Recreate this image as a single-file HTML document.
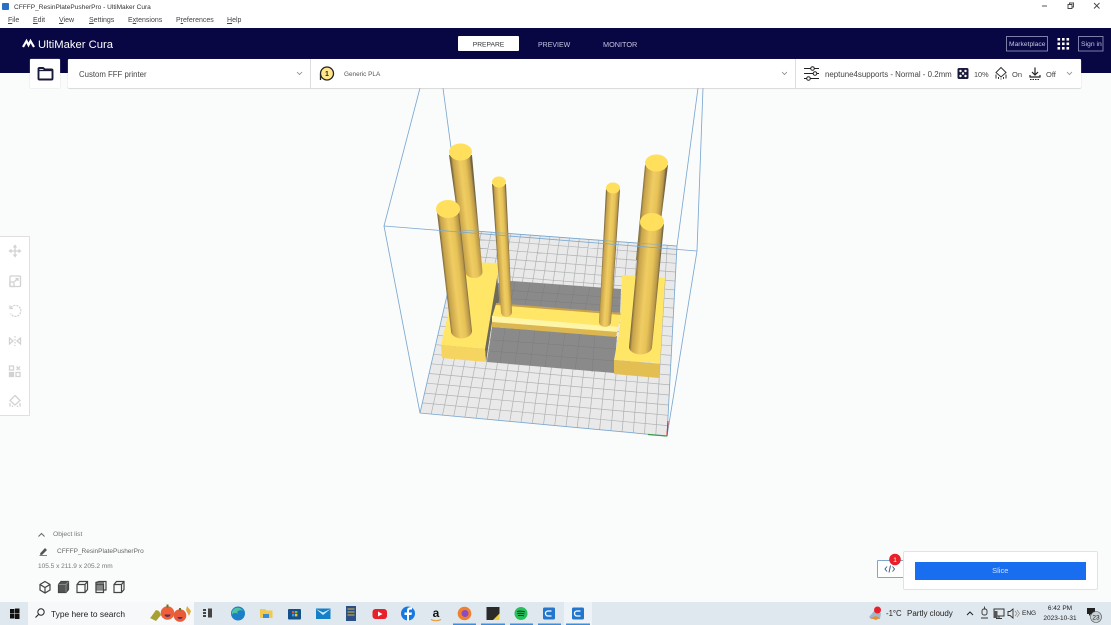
<!DOCTYPE html>
<html><head><meta charset="utf-8"><style>
html,body{margin:0;padding:0}
body{width:1111px;height:625px;overflow:hidden;position:relative;background:#fafbfb;font-family:"Liberation Sans",sans-serif;color:#333}
.a{position:absolute;white-space:nowrap}
svg{position:absolute;left:0;top:0}
u{text-decoration:underline}
</style></head><body>
<svg width="1111" height="625" viewBox="0 0 1111 625" style="z-index:1">
<defs>
<linearGradient id="p"><stop offset="0" stop-color="#77683e"/><stop offset=".1" stop-color="#c7a24b"/><stop offset=".45" stop-color="#f0cd62"/><stop offset=".7" stop-color="#e6c257"/><stop offset=".92" stop-color="#b9974a"/><stop offset="1" stop-color="#6f6340"/></linearGradient>
<linearGradient id="p1" href="#p" gradientUnits="userSpaceOnUse" x1="457" y1="214" x2="477" y2="211.700"/>
<linearGradient id="p2" href="#p" gradientUnits="userSpaceOnUse" x1="444" y1="272" x2="465.500" y2="269.600"/>
<linearGradient id="p3" href="#p" gradientUnits="userSpaceOnUse" x1="496.500" y1="248" x2="509" y2="247.300"/>
<linearGradient id="p4" href="#p" gradientUnits="userSpaceOnUse" x1="602.500" y1="255" x2="615.500" y2="255.800"/>
<linearGradient id="p5" href="#p" gradientUnits="userSpaceOnUse" x1="640.500" y1="212" x2="662" y2="214"/>
<linearGradient id="p6" href="#p" gradientUnits="userSpaceOnUse" x1="634.700" y1="285" x2="658" y2="287"/>
</defs>
<path d="M462 230L677 246L667 436L420 413Z" fill="#e9e9e9"/>
<path fill="none" stroke="#aeb2b4" stroke-width=".7" d="M431.2 414L471.8 230.7M442.5 415.1L481.5 231.5M453.7 416.1L491.3 232.2M464.9 417.2L501.1 232.9M476.1 418.2L510.9 233.6M487.4 419.3L520.6 234.4M498.6 420.3L530.4 235.1M509.8 421.4L540.2 235.8M521 422.4L550 236.5M532.3 423.5L559.7 237.3M543.5 424.5L569.5 238M554.7 425.5L579.3 238.7M566 426.6L589 239.5M577.2 427.6L598.8 240.2M588.4 428.7L608.6 240.9M599.6 429.7L618.4 241.6M610.9 430.8L628.1 242.4M622.1 431.8L637.9 243.1M633.3 432.9L647.7 243.8M644.5 433.9L657.5 244.5M655.8 435L667.2 245.3
M422.3 402.9L667.6 425.6M424.6 393.1L668.1 415.3M426.8 383.2L668.6 405M429.1 373.5L669.2 395M431.3 363.8L669.7 384.9M433.5 354.3L670.2 375M435.7 344.7L670.7 365.1M437.8 335.4L671.2 355.4M440 326.1L671.8 345.8M442.1 316.9L672.3 336.3M444.2 307.8L672.8 326.8M446.2 298.8L673.2 317.4M448.3 289.8L673.7 308.1M450.3 281L674.2 299M452.3 272.3L674.7 289.9M454.3 263.7L675.2 281M456.2 255.1L675.6 272M458.2 246.6L676.1 263.3M460.1 238.2L676.6 254.5"/>
<g fill="none" stroke="#7ba8d0" stroke-width=".85">
<path d="M420 88L384 226L420 413L667 436L697 251L703 88"/>
<path d="M443 88L462 230L420 413M698 88L677 246L667 436M462 230L677 246"/>
</g>
<path d="M512 281L621 289L620 314L496 304L498 283Z" fill="#8a8a8a"/>
<path d="M492 327L617 336L614 373L487 362Z" fill="#8a8a8a"/>
<path fill="none" stroke="#7d7d7d" stroke-width=".5" d="M503 290L621 298M499 298L620 306M493 340L616 349M490 351L615 361M515 282L510 304M530 283L525 305M545 284L540 306M560 285L555 307M575 286L570 309M590 287L585 310M605 288L600 311M505 329L500 363M520 330L515 364M535 331L530 366M550 332L545 367M565 333L560 368M580 334L575 370M595 335L592 372"/>
<path d="M485 349L497 272L499 300L492 322L486 362Z" fill="#6f6a55"/>
<path d="M496 304L622 313L618 327L492 317Z" fill="#ffe666"/>
<path d="M492 316L618 327L617 332L492 322Z" fill="#fff5a6"/>
<path d="M492 322L617 332L616 337L492 327Z" fill="#dcb64f"/>
<path d="M496 303L622 313L622 315L496 305Z" fill="#c9a24a"/>
<path d="M441 345L485 349L499 266L497 263L460 262Z" fill="#ffe666"/>
<path d="M441 345L485 349L486 362L442 358Z" fill="#f5d45f"/>
<path d="M622 275L665 278L660 363L614 360L620 328Z" fill="#ffe666"/>
<path d="M614 360L660 364L659 378L614 374Z" fill="#e3bf52"/>
<path d="M449 155L472 155L482.500 272A8.500 6 0 0 1 465.500 272Z" fill="url(#p1)"/>
<ellipse cx="460.500" cy="152" rx="11.500" ry="8.500" fill="#ffdf5c"/>
<path d="M492 184L506 184L512 312A5.500 5 0 0 1 501 312Z" fill="url(#p3)"/>
<ellipse cx="499" cy="182" rx="7" ry="5.500" fill="#ffdf5c"/>
<path d="M606 189L620 189L611 322A6 5 0 0 1 599 322Z" fill="url(#p4)"/>
<ellipse cx="613" cy="188" rx="7" ry="5.500" fill="#ffdf5c"/>
<path d="M645 165L668 165L656 260L636 260Z" fill="url(#p5)"/>
<ellipse cx="656.500" cy="163" rx="11.500" ry="8.500" fill="#ffdf5c"/>
<path d="M437 212L459 212L472 331A10.500 7.500 0 0 1 451 331Z" fill="url(#p2)"/>
<ellipse cx="448" cy="209" rx="12" ry="9" fill="#ffdf5c"/>
<path d="M640.500 224L664 224L652 347A11.500 7.500 0 0 1 629 347Z" fill="url(#p6)"/>
<ellipse cx="652" cy="222" rx="12" ry="9" fill="#ffdf5c"/>
<path d="M384 226L697 251" stroke="#7ba8d0" stroke-width=".85" fill="none"/>
<path d="M462 230L677 246" stroke="#7ba8d0" stroke-width=".7" fill="none" opacity=".7"/>
<path d="M667 436L668 421" stroke="#d33" stroke-width="1.200"/>
<path d="M667 436L648 434.500" stroke="#3a9a45" stroke-width="1.200"/>
</svg>

<!-- title bar -->
<div class="a" style="left:0;top:0;width:1111px;height:28px;background:#fff;z-index:2"></div>
<div class="a" style="left:2px;top:3px;width:7px;height:7px;background:#2a6fc4;border-radius:1px;z-index:3"></div>
<div class="a" style="left:14px;top:2.500px;font-size:6.550px;line-height:10px;color:#333;z-index:3">CFFFP_ResinPlatePusherPro - UltiMaker Cura</div>
<div class="a" style="left:8px;top:16px;font-size:7px;line-height:10px;color:#444;z-index:3"><u>F</u>ile</div>
<div class="a" style="left:33px;top:16px;font-size:7px;line-height:10px;color:#444;z-index:3"><u>E</u>dit</div>
<div class="a" style="left:59px;top:16px;font-size:7px;line-height:10px;color:#444;z-index:3"><u>V</u>iew</div>
<div class="a" style="left:89px;top:16px;font-size:7px;line-height:10px;color:#444;z-index:3"><u>S</u>ettings</div>
<div class="a" style="left:128px;top:16px;font-size:7px;line-height:10px;color:#444;z-index:3">E<u>x</u>tensions</div>
<div class="a" style="left:176px;top:16px;font-size:7px;line-height:10px;color:#444;z-index:3">P<u>r</u>eferences</div>
<div class="a" style="left:227px;top:16px;font-size:7px;line-height:10px;color:#444;z-index:3"><u>H</u>elp</div>
<svg width="1111" height="28" style="z-index:3" viewBox="0 0 1111 28">
<path d="M1042 6H1047" stroke="#555" stroke-width="1"/>
<path d="M1068 4.500h4v4h-4zM1069.500 4.500v-1.500h4v4h-1.500" fill="none" stroke="#444" stroke-width=".9"/>
<path d="M1094 3L1099.500 8.500M1099.500 3L1094 8.500" stroke="#444" stroke-width=".9"/>
</svg>

<!-- header -->
<div class="a" style="left:0;top:28px;width:1111px;height:45px;background:#080643;z-index:2"></div>
<svg width="1111" height="73" style="z-index:3" viewBox="0 0 1111 73">
<path d="M23 47L26.500 41L28.500 45L30.500 41L34 47" fill="none" stroke="#fff" stroke-width="2.200"/>
<rect x="1006.500" y="36.500" width="41" height="14.500" fill="none" stroke="#9c9cc4" stroke-width=".8"/>
<rect x="1078.500" y="36.500" width="24.500" height="14.500" fill="none" stroke="#9c9cc4" stroke-width=".8"/>
<g fill="#fff"><rect x="1057.500" y="38" width="2.600" height="2.600"/><rect x="1062" y="38" width="2.600" height="2.600"/><rect x="1066.500" y="38" width="2.600" height="2.600"/><rect x="1057.500" y="42.500" width="2.600" height="2.600"/><rect x="1062" y="42.500" width="2.600" height="2.600"/><rect x="1066.500" y="42.500" width="2.600" height="2.600"/><rect x="1057.500" y="47" width="2.600" height="2.600"/><rect x="1062" y="47" width="2.600" height="2.600"/><rect x="1066.500" y="47" width="2.600" height="2.600"/></g>
</svg>
<div class="a" style="left:38px;top:38px;font-size:11.250px;line-height:14px;color:#fff;z-index:3">UltiMaker Cura</div>
<div class="a" style="left:458px;top:36px;width:61px;height:15px;background:#fff;border-radius:1px;z-index:3"></div>
<div class="a" style="left:458px;top:37px;width:61px;z-index:4;text-align:center;font-size:6.700px;line-height:15px;color:#333;transform:translateY(.5px)">PREPARE</div>
<div class="a" style="left:538px;top:38px;font-size:7px;line-height:15px;color:#c4c4e0;z-index:3">PREVIEW</div>
<div class="a" style="left:603px;top:37px;font-size:7.300px;line-height:15px;color:#c4c4e0;z-index:3">MONITOR</div>
<div class="a" style="left:1009px;top:36.500px;font-size:6.700px;line-height:15px;color:#c4c4e0;z-index:3">Marketplace</div>
<div class="a" style="left:1081px;top:36.500px;font-size:6.800px;line-height:15px;color:#c4c4e0;z-index:3">Sign in</div>

<!-- toolbar -->
<div class="a" style="left:30px;top:58.500px;width:30px;height:29.500px;background:#fff;border-radius:1px;box-shadow:0 0 1px #bbb;z-index:3"></div>
<div class="a" style="left:68px;top:58.500px;width:1013px;height:29.500px;background:#fff;border-radius:1px;box-shadow:0 .5px 1px #bbb;z-index:3"></div>
<div class="a" style="left:310px;top:58.500px;width:1px;height:29.500px;background:#ddd;z-index:4"></div>
<div class="a" style="left:795px;top:58.500px;width:1px;height:29.500px;background:#ddd;z-index:4"></div>
<div class="a" style="left:79px;top:68.500px;font-size:7.800px;line-height:11px;color:#444;z-index:4">Custom FFF printer</div>
<div class="a" style="left:344px;top:68.500px;font-size:6.400px;line-height:11px;color:#555;z-index:4">Generic PLA</div>
<div class="a" style="left:825px;top:68.500px;font-size:7.900px;line-height:11px;color:#444;z-index:4">neptune4supports - Normal - 0.2mm</div>
<div class="a" style="left:974px;top:68.500px;font-size:7.300px;line-height:11px;color:#444;z-index:4">10%</div>
<div class="a" style="left:1012px;top:68.500px;font-size:7.500px;line-height:11px;color:#444;z-index:4">On</div>
<div class="a" style="left:1046px;top:68.500px;font-size:7.500px;line-height:11px;color:#444;z-index:4">Off</div>
<svg width="1111" height="95" style="z-index:4" viewBox="0 0 1111 95">
<path d="M38.500 69v9.500a1 1 0 0 0 1 1h12a1 1 0 0 0 1-1v-8a1 1 0 0 0-1-1h-6.500l-2-1.500h-3.500a1 1 0 0 0-1 .5z" fill="none" stroke="#1a1a3a" stroke-width="1.900"/>
<path d="M38.500 70.500h14" stroke="#1a1a3a" stroke-width="1.300"/>
<path d="M297 72l2.500 2.500 2.500-2.500M782 72l2.500 2.500 2.500-2.500M1067 72l2.500 2.500 2.500-2.500" fill="none" stroke="#888" stroke-width=".8"/>
<circle cx="327" cy="73.500" r="6.500" fill="#ffe68a" stroke="#222" stroke-width="1.300"/>
<path d="M320.500 74v6" stroke="#222" stroke-width="1.300"/>
<text x="327" y="76" font-size="7" font-weight="bold" text-anchor="middle" fill="#222" font-family="Liberation Sans, sans-serif">1</text>
<path d="M804 68.500H819M804 73.500H819M804 78.500H819" stroke="#222" stroke-width="1"/>
<circle cx="812.500" cy="68.500" r="1.800" fill="#fff" stroke="#222"/><circle cx="815" cy="73.500" r="1.800" fill="#fff" stroke="#222"/><circle cx="808.500" cy="78.500" r="1.800" fill="#fff" stroke="#222"/>
<rect x="957.500" y="68" width="11" height="11" rx="1.500" fill="#1a1a3a"/>
<g fill="#fff"><circle cx="960.500" cy="71" r="1.200"/><circle cx="965.500" cy="71" r="1.200"/><circle cx="963" cy="73.500" r="1.200"/><circle cx="960.500" cy="76" r="1.200"/><circle cx="965.500" cy="76" r="1.200"/></g>
<path d="M1001 67.500L1006 72.500L1001 77L996 72.500Z" fill="none" stroke="#333" stroke-width="1"/>
<path d="M996 78.500v-4M998.500 79v-2M1003.500 79v-2M1006 78.500v-4M1001 79.500v-1" stroke="#333" stroke-width="1"/>
<path d="M1035 67.500v7M1032 72l3 3 3-3" fill="none" stroke="#222" stroke-width="1.200"/>
<path d="M1030 75v2h10v-2" fill="none" stroke="#222" stroke-width="1.200"/>
<path d="M1030 79.500h10" stroke="#222" stroke-width="1" stroke-dasharray="1.500 1"/>
</svg>

<!-- left toolbar -->
<div class="a" style="left:0;top:236px;width:29.500px;height:180px;background:#fff;border:1px solid #e0e0e0;border-left:0;box-sizing:border-box;z-index:3"></div>
<svg width="40" height="425" style="z-index:4" viewBox="0 0 40 425">
<g fill="none" stroke="#d2d2d2" stroke-width="1.300">
<path d="M10 251H20M15 246V256"/><path d="M13.500 247.500L15 245.500L16.500 247.500M13.500 254.500L15 256.500L16.500 254.500M11.500 249.500L9.500 251L11.500 252.500M18.500 249.500L20.500 251L18.500 252.500"/>
<rect x="10" y="276" width="10.500" height="10.500" rx="1"/><rect x="10" y="282" width="4" height="4.500"/><path d="M14.500 281.500L18 278.500M15.500 278.500H18V281"/>
<path d="M11 307.500a5.500 5.500 0 1 1 -.5 6" stroke-dasharray="2 1"/><path d="M10 305.500V308.500H13"/>
<path d="M15 336V346" stroke-dasharray="1.500 1.500"/><path d="M9.500 338V344L13 341ZM20.500 338V344L17 341Z"/>
<rect x="9.500" y="366" width="4" height="4"/><path d="M16.500 366.500L20 370M20 366.500L16.500 370"/><rect x="9.500" y="372.500" width="4" height="4" fill="#d2d2d2"/><rect x="16" y="372.500" width="4" height="4"/>
<path d="M15 395.500L20 400.500L15 405L10 400.500Z"/><path d="M10 406.500V403M12.500 407V405.500M17.500 407V405.500M20 406.500V403" />
</g></svg>

<!-- object list -->
<div class="a" style="left:53px;top:530px;font-size:6.700px;line-height:10px;color:#777;z-index:3">Object list</div>
<div class="a" style="left:57px;top:546.800px;font-size:6.500px;line-height:10px;color:#666;z-index:3">CFFFP_ResinPlatePusherPro</div>
<div class="a" style="left:38px;top:561.500px;font-size:6.500px;line-height:10px;color:#777;z-index:3">105.5 x 211.9 x 205.2 mm</div>
<svg width="140" height="600" style="z-index:3" viewBox="0 0 140 600">
<path d="M38.500 536.500L41.500 533.500L44.500 536.500" fill="none" stroke="#666" stroke-width="1"/>
<path d="M39.500 555.500H47M40.500 553.500L45 548.500L46.500 550L42 554.500H40.500Z" fill="#555" stroke="#555" stroke-width=".7"/>
<g stroke="#444" stroke-width="1.200" fill="none">
<path d="M45 581.500L50 584.500V590L45 593L40 590V584.500ZM40 584.500L45 587.500L50 584.500M45 587.500V593"/>
<path d="M58.500 584.500L61 581.500H68.500V589.500L66 592.500H58.500Z" fill="#555"/><path d="M58.500 584.500H66V592.500M66 584.500L68.500 581.500" stroke="#999" stroke-width=".7"/>
<path d="M77 584.500L79.500 581.500H87.500V589.500L85 592.500H77ZM77 584.500H85V592.500M85 584.500L87.500 581.500"/>
<path d="M96 582.500L99 581.500H106V590H103.500V592.500H96ZM96 584.500H103.500V592.500"/><path d="M96 582.500H103.500V590H96Z" fill="#555" opacity=".7"/>
<path d="M114 584.500L116.500 581.500H124V589.500L121.500 592.500H114ZM114 584.500H121.500V592.500M121.500 584.500L124 581.500"/>
</g></svg>

<!-- slice -->
<div class="a" style="left:877px;top:560px;width:30px;height:18px;background:#fff;border:1px solid #7ea6cc;border-radius:1px;box-sizing:border-box;z-index:3"></div>
<div class="a" style="left:903px;top:551px;width:195px;height:39px;background:#fff;border:1px solid #e2e2e2;border-radius:2px;box-sizing:border-box;z-index:4"></div>
<div class="a" style="left:915px;top:561.500px;width:170.500px;height:18px;background:#196ef0;z-index:5;text-align:center;font-size:7.500px;line-height:18.500px;color:#cfe0fb">Slice</div>
<svg width="1111" height="600" style="z-index:6" viewBox="0 0 1111 600">
<path d="M887 566.500L885 569L887 571.500M892.500 566.500L894.500 569L892.500 571.500M890.500 565.500L889 572.500" fill="none" stroke="#3b5f8a" stroke-width="1"/>
<circle cx="895" cy="559.500" r="5.800" fill="#e8202a"/>
<text x="895" y="562" font-size="6.500" text-anchor="middle" fill="#fff" font-family="Liberation Sans, sans-serif">1</text>
</svg>

<!-- taskbar -->
<div class="a" style="left:0;top:602px;width:1111px;height:23px;background:#dfe8ee;z-index:3"></div>
<div class="a" style="left:28px;top:602px;width:166px;height:23px;background:#f6f8f9;z-index:4"></div>
<div class="a" style="left:564px;top:602px;width:28px;height:23px;background:#eef3f7;z-index:4"></div>
<div class="a" style="left:51px;top:607.500px;font-size:8.400px;line-height:12px;color:#222;z-index:5">Type here to search</div>
<div class="a" style="left:886px;top:607.500px;font-size:7.800px;line-height:12px;color:#222;z-index:5">-1°C</div>
<div class="a" style="left:907px;top:607.500px;font-size:8px;line-height:12px;color:#222;z-index:5">Partly cloudy</div>
<div class="a" style="left:1022px;top:608px;font-size:6.500px;line-height:12px;color:#222;z-index:5">ENG</div>
<div class="a" style="left:1043.500px;top:603.500px;width:33px;text-align:center;font-size:6.500px;line-height:10px;color:#222;z-index:5">6:42 PM</div>
<div class="a" style="left:1039.500px;top:614px;width:41px;text-align:center;font-size:6.500px;line-height:10px;color:#222;z-index:5">2023-10-31</div>
<svg width="1111" height="625" style="z-index:5" viewBox="0 0 1111 625">
<g fill="#111"><rect x="10" y="609" width="4.500" height="4.500"/><rect x="15" y="608.500" width="4.500" height="5"/><rect x="10" y="614" width="4.500" height="4.500"/><rect x="15" y="614" width="4.500" height="5"/></g>
<circle cx="41" cy="612" r="3.200" fill="none" stroke="#222" stroke-width="1"/><path d="M38.500 614.500L35.500 617.500" stroke="#222" stroke-width="1.100"/>
<path d="M151 617L156 610L159 611L161 615L156 621L150 618Z" fill="#a8a030"/>
<circle cx="167.500" cy="613" r="6.800" fill="#ee6038"/><circle cx="180" cy="615.500" r="6.300" fill="#e85a38"/>
<rect x="166.500" y="604.500" width="2" height="3" fill="#5a7a30"/><rect x="179" y="608" width="2" height="2.500" fill="#5a7a30"/>
<path d="M164.500 614.500a3 2.500 0 0 0 6 0ZM177.500 617a2.500 2 0 0 0 5 0Z" fill="#5a3060"/>
<path d="M187 606L191 611L189 616L186 610Z" fill="#e0a840"/>
<g fill="#444"><rect x="203" y="609" width="3" height="2"/><rect x="203" y="612" width="3" height="2"/><rect x="203" y="615" width="3" height="2"/><rect x="208" y="608.500" width="4" height="9"/></g>
<circle cx="238" cy="613.500" r="7" fill="#1c7fc8"/><path d="M234 609a6 6 0 0 1 9 2a4 3.500 0 0 0-5 0c-1 1-1 2 0 3a4 4 0 0 0-3-1a3 3 0 0 0-3 2a6 6 0 0 1 2-6z" fill="#4fc3a0"/>
<path d="M260 609h5l1.500 1.500H272.500V618H260Z" fill="#f2c94c"/><rect x="263" y="614" width="6" height="4" fill="#3a8bd0"/>
<rect x="288" y="609" width="13" height="10.500" rx="1" fill="#14508a"/><g><rect x="292" y="611" width="2.400" height="2.400" fill="#e8552c"/><rect x="295" y="611" width="2.400" height="2.400" fill="#6fbf3a"/><rect x="292" y="614" width="2.400" height="2.400" fill="#2ea4e8"/><rect x="295" y="614" width="2.400" height="2.400" fill="#f5c02c"/></g>
<rect x="316" y="608.500" width="14.500" height="10.500" fill="#1480c8"/><path d="M316 609L323 615L330.500 609L323 612.500Z" fill="#cfeafa"/>
<rect x="346" y="606" width="10" height="15" fill="#2b4f86"/><path d="M347.500 609h7M347.500 612h7M347.500 615h7" stroke="#b9a24a" stroke-width="1.200"/>
<rect x="372.500" y="609" width="14.500" height="10" rx="3" fill="#e8202a"/><path d="M378 611.500L382.500 614L378 616.500Z" fill="#fff"/>
<circle cx="408" cy="613.500" r="7" fill="#1778e0"/><path d="M409 621v-6h2.500l.5-2.500h-3v-1.500c0-1 .5-1.500 1.500-1.500h1.500v-2.200c-3.500-.5-5 .7-5 3.500v1.700h-2.500v2.500h2.500v6z" fill="#fff"/>
<text x="436" y="617" font-size="12" font-weight="bold" text-anchor="middle" fill="#111" font-family="Liberation Sans, sans-serif">a</text>
<path d="M431 619.500q5 2.500 10 0" fill="none" stroke="#e8962a" stroke-width="1"/>
<circle cx="464.500" cy="613.500" r="6.800" fill="#f08030"/><circle cx="465" cy="613.500" r="3.500" fill="#8a4cc0"/>
<rect x="486.500" y="607" width="13" height="13" fill="#2a2a2a"/><path d="M493 620L499.500 613.500V620Z" fill="#f0d030"/>
<circle cx="521" cy="613.500" r="6.500" fill="#25c05a"/><path d="M517 611.500q4-1 8 .5M517.500 613.500q3.500-.8 7 .5M518 615.500q3-.6 6 .4" fill="none" stroke="#123" stroke-width=".9"/>
<rect x="543" y="607.500" width="12" height="12" rx="1.500" fill="#2277cc"/><path d="M551.500 611h-3.500a2.500 2.500 0 0 0 0 5h3.500" fill="none" stroke="#fff" stroke-width="1.300"/>
<rect x="572" y="607.500" width="12" height="12" rx="1.500" fill="#2277cc"/><path d="M580.500 611h-3.500a2.500 2.500 0 0 0 0 5h3.500" fill="none" stroke="#fff" stroke-width="1.300"/>
<g fill="#3b8ede"><rect x="453" y="623.500" width="23" height="1.500"/><rect x="481" y="623.500" width="24" height="1.500"/><rect x="510" y="623.500" width="23" height="1.500"/><rect x="538" y="623.500" width="23" height="1.500"/><rect x="566" y="623.500" width="24" height="1.500"/></g>
<path d="M869 617L875 610L881 613L880 619H871Z" fill="#9fb8d0"/><path d="M870 618l6-2 4 2-4 2z" fill="#e89030"/>
<circle cx="877.500" cy="610" r="3.500" fill="#e8202a"/>
<path d="M967 615l3-3 3 3" fill="none" stroke="#222" stroke-width="1"/>
<rect x="982" y="609" width="5" height="6" rx="2" fill="none" stroke="#333" stroke-width=".9"/><path d="M981 618h7M984.500 606.500v2" stroke="#333" stroke-width=".9"/>
<rect x="994" y="609" width="10" height="7" fill="none" stroke="#333" stroke-width="1"/><path d="M999 616v2M996 618.500h6" stroke="#333" stroke-width="1"/><rect x="993.500" y="611" width="4" height="7" fill="#555"/>
<path d="M1008 611.500h2l3-2.500v9l-3-2.500h-2Z" fill="none" stroke="#333" stroke-width=".9"/><path d="M1015 611l2 2.500-2 2.500M1017 610l2.500 3.500-2.500 3.500" fill="none" stroke="#888" stroke-width=".7"/>
<path d="M1087 608h8v6h-4l-2 2v-2h-2Z" fill="#222"/>
<circle cx="1096" cy="617" r="5.500" fill="#c9d2d8" stroke="#555" stroke-width=".6"/>
<text x="1096" y="619.500" font-size="6.500" text-anchor="middle" fill="#222" font-family="Liberation Sans, sans-serif">23</text>
</svg>
</body></html>
